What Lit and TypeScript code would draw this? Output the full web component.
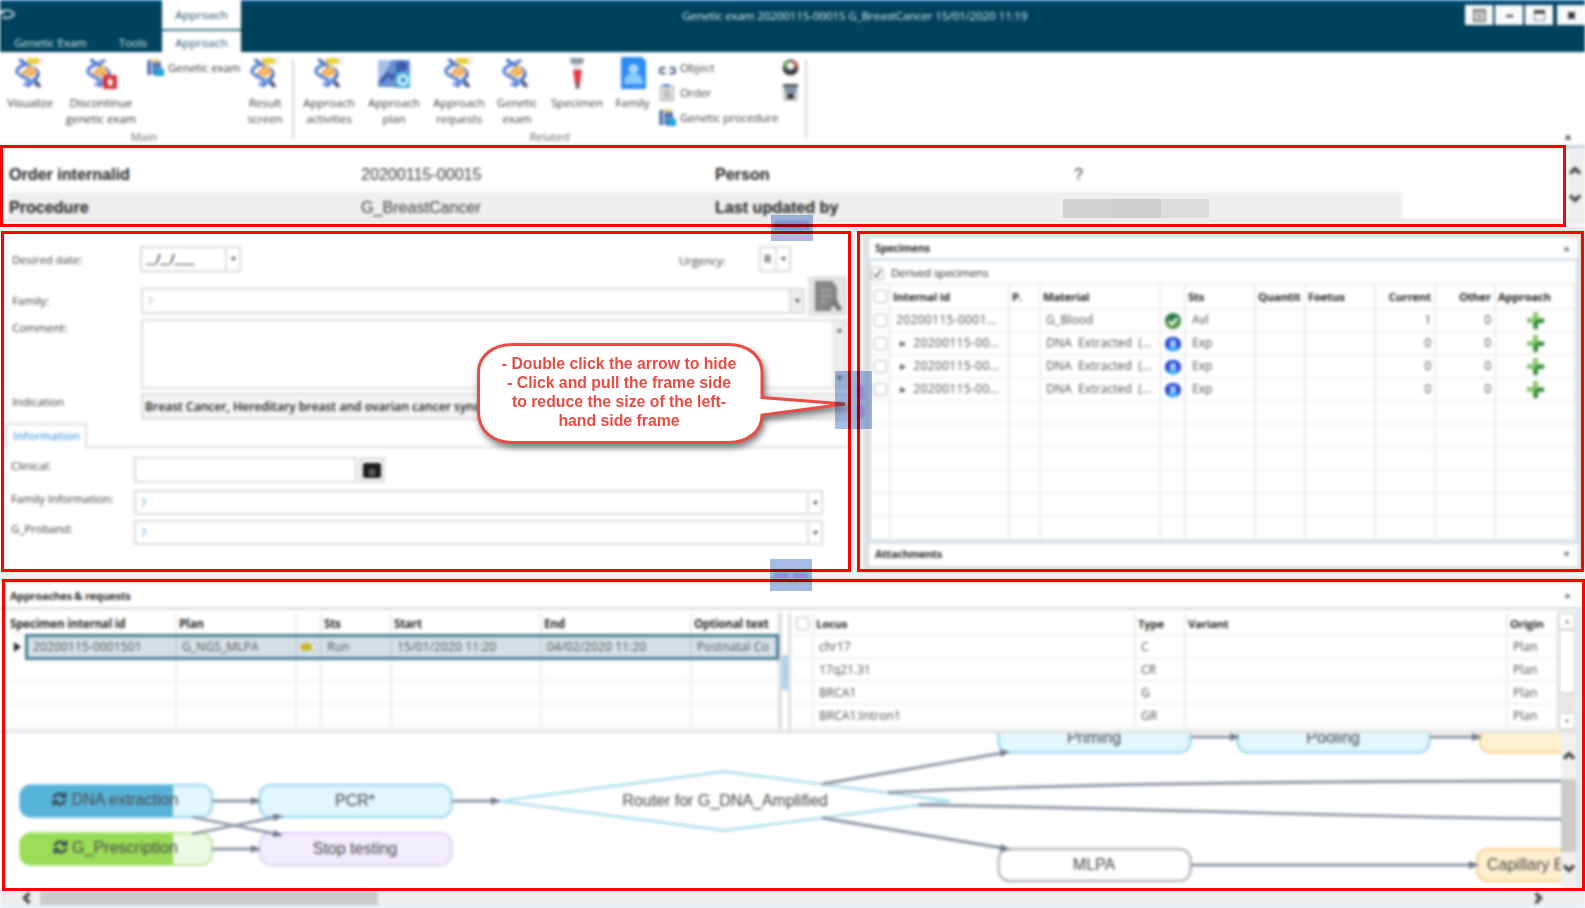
import { LitElement, html, css, svg, nothing } from "lit";
import { customElement } from "lit/decorators.js";
import { classMap } from "lit/directives/class-map.js";

const dna = (badge: string) => html`<svg class="big" viewBox="0 0 32 32">
  <path d="M6 2c2 6 20 8 18 16-1 5-8 6-10 12" fill="none" stroke="#3a62c4" stroke-width="3"/>
  <path d="M20 3C16 7 2 8 3 15c1 5 18 8 22 15" fill="none" stroke="#5b82d8" stroke-width="3.4"/>
  <path d="M8 15l9-8 7 8-5 5-10-2z" fill="#f6c684"/>
  <path d="M8 17l9-7M13 19l8-6" stroke="#e79a3c" stroke-width="1.6"/>
  <path d="M10 29c2-4 6-5 10-4" stroke="#7d9ee6" stroke-width="3" fill="none"/>
  <path d="M22 24l4 6" stroke="#50525c" stroke-width="3"/>
  ${badge === "tag" ? svg`<rect x="13" y="1" width="12" height="6" rx="1" fill="#e8cf3a"/><rect x="25.500" y="1.500" width="4" height="5" rx="1" fill="#fff" stroke="#c9c9c9"/>` : nothing}
  ${badge === "stop" ? svg`<rect x="18" y="18" width="14" height="14" rx="1" fill="#d3343c"/><path d="M23 28v-6l1.500-1 1 2 2-1v5l-2 2z" fill="#fff"/>` : nothing}
</svg>`;

const planIcon = html`<svg class="big" viewBox="0 0 32 32">
  <rect x="0" y="3" width="32" height="27" fill="#6a8fd3"/><path d="M0 3h14L4 20l-4 4z" fill="#a9c0ea"/>
  <path d="M3 25l7-8 4 4 9-11" fill="none" stroke="#33539f" stroke-width="3"/>
  <rect x="18" y="4" width="11" height="10" rx="4" fill="#3c5eb0"/>
  <rect x="17" y="15" width="15" height="16" fill="#45a8cf"/><circle cx="25" cy="23" r="4.500" fill="none" stroke="#d8f3ff" stroke-width="3"/></svg>`;

const tubeIcon = html`<svg class="big" viewBox="0 0 32 32">
  <path d="M9 1h14l-1 6H10z" fill="#8d9aac"/><rect x="12" y="7" width="8" height="6" fill="#e3e6ea"/>
  <path d="M12 13h9l-2 13h-5z" fill="#e2383f"/><path d="M13.500 25h6l-1.500 7h-3z" fill="#88676b"/></svg>`;

const familyIcon = html`<svg class="big" viewBox="0 0 32 32">
  <path d="M4 0h21l4 4v28H4z" fill="#2d8cf2"/><circle cx="16.500" cy="12" r="5" fill="#a5d6ff"/>
  <path d="M7 27c0-6 3-10 6-10h7c3 0 6 4 6 10z" fill="#8bcaff"/></svg>`;

const procIcon = html`<svg class="sm" viewBox="0 0 16 16">
  <path d="M2 1v14M7 3v12" stroke="#2c56a4" stroke-width="3"/><path d="M2 2l8 2M2 7l7 3M2 12l5 1" stroke="#7d96c8" stroke-width="2"/>
  <rect x="4" y="0" width="8" height="3" fill="#e9cf77"/><rect x="9" y="3" width="4" height="6" fill="#4768a8"/>
  <rect x="8" y="9" width="8" height="7" fill="#21a3d4"/></svg>`;
const objIcon = html`<svg class="sm" viewBox="0 0 16 16"><path d="M6 8.500H3a2.500 2.500 0 000 5h3M10 8.500h3a2.500 2.500 0 010 5h-3" fill="none" stroke="#5a7295" stroke-width="2.400"/></svg>`;
const orderIcon = html`<svg class="sm" viewBox="0 0 16 16"><rect x="1.500" y="2" width="12" height="13.500" fill="#eee" stroke="#999"/><rect x="4" y="0" width="6" height="3" fill="#4c93d8"/><path d="M4 6h7M4 9h7M4 12h7" stroke="#888" stroke-width="1.300"/></svg>`;
const globeIcon = html`<svg class="sm" viewBox="0 0 16 16"><circle cx="8" cy="8" r="7.500" fill="#3b3f42"/><path d="M1 8a7 7 0 016-7l1 7z" fill="#6aa84f"/><path d="M9 1a7 7 0 016 7l-6 1z" fill="#d3544a"/><circle cx="8" cy="6.500" r="3.400" fill="#eef3f5"/></svg>`;
const calcIcon = html`<svg class="sm" viewBox="0 0 16 16"><rect x="1" y="0" width="14" height="16" fill="#c6c9ce"/><rect x="1" y="0" width="14" height="3" fill="#4b5563"/><rect x="3" y="4" width="10" height="4" fill="#7486a4"/><rect x="5" y="9" width="6" height="5" fill="#333"/></svg>`;

const okIcon = html`<svg class="st" viewBox="0 0 16 16"><circle cx="8" cy="8" r="8" fill="#2f7a42"/><path d="M1 9a7 7 0 0014-1z" fill="#5c9c3f"/><path d="M4 8l3 3 5.500-6" fill="none" stroke="#fff" stroke-width="2.400"/></svg>`;
const expIcon = html`<svg class="st" viewBox="0 0 16 16"><rect x="0" y="1" width="16" height="14" rx="6.500" fill="#2948cc"/><path d="M2 11h12l-4 4.500H6z" fill="#35b0f2"/><rect x="5" y="4" width="6" height="7" rx="1" fill="#a5c4fa"/></svg>`;
const plusIcon = html`<svg class="plus" viewBox="0 0 20 20"><path d="M7.500 1h5v6.500H19v5h-6.500V19h-5v-6.500H1v-5h6.500z" fill="#45973f"/><path d="M7.500 1h5v6.500L7.500 12.500H1v-5h6.500z" fill="#8fc873"/><path d="M10 10h9v2.500h-6.500V19H10z" fill="#2f8640"/></svg>`;
const chevron = (dir: string) => html`<svg class="chev ${dir}" viewBox="0 0 14 14"><path d="M2 9.500l5-5 5 5" fill="none" stroke="#444" stroke-width="3.300"/></svg>`;
const tri = (dir: string) => html`<svg class="tri ${dir}" viewBox="0 0 8 8"><path d="M0.500 6.500L4 1.500l3.500 5z" fill="#444"/></svg>`;
const box = html`<i class="box"></i>`;

@customElement("app-ribbon")
class AppRibbon extends LitElement {
  static styles = css`
    :host { display: block; font-family: "Open Sans", sans-serif; }
    .title { height: 52px; display: grid; grid-template-columns: 162px 79px 1fr 1fr; background: linear-gradient(#00528a 0, #00528a 2px, #00415c 4px); color: #dde7ec; font-size: 11.6px; }
    .left { display: flex; flex-direction: column; }
    .logo { height: 30px; padding-top: 8px; box-sizing: border-box; }
    .logo svg { width: 17px; height: 13px; display: block; }
    .menus { display: flex; padding: 5px 0 0 14px; gap: 32px; line-height: 16px; letter-spacing: -0.1px; }
    .tabs { background: #fff; color: #1f5674; text-align: center; display: flex; flex-direction: column; }
    .tabs b { font-weight: 400; height: 29px; line-height: 30px; border-bottom: 2px solid #3a7188; box-sizing: content-box; margin-top: 0; }
    .tabs b:last-child { height: 21px; border: 0; line-height: 24px; }
    .caption { padding: 7px 0 0 441px; white-space: nowrap; line-height: 17px; letter-spacing: -0.13px; }
    .win { display: flex; justify-content: flex-end; gap: 2px; padding-top: 5px; }
    .win span { width: 28px; height: 20px; background: #f8fafb; display: grid; place-items: center; }
    .win span:last-child { margin-left: 2px; }
    .win svg { width: 13px; height: 13px; }
    .ribbon { height: 93px; background: #fff; display: flex; border-bottom: 3px solid #c4ced6; color: #3a3a3a; font-size: 11.5px; line-height: 16px; letter-spacing: -0.08px; }
    .group { display: grid; grid-template-rows: 76px 18px; height: 93px; position: relative; }
    .group::after { content: ""; position: absolute; right: -1px; top: 8px; height: 79px; border-left: 2px solid #ccd5e6; }
    .main { width: 293px; } .related { width: 513px; }
    .items { display: grid; }
    .main .items { grid-template-columns: 60px 82px 98px 50px; }
    .related .items { grid-template-columns: 72px 58px 72px 44px 76px 35px 132px 18px; }
    .btn { display: flex; flex-direction: column; align-items: center; text-align: center; padding-top: 5px; white-space: pre; }
    .big { width: 32px; height: 32px; flex: none; margin-bottom: 6px; }
    .sm { width: 17px; height: 17px; flex: none; }
    .col { display: flex; flex-direction: column; gap: 8px; padding: 7px 0 0 9px; }
    .main .col { padding-left: 5px; }
    .col.bare { padding-left: 0; }
    .line { display: flex; gap: 4px; height: 17px; align-items: center; white-space: nowrap; }
    .name { text-align: center; color: #666; padding-left: 0; line-height: 17px; }
    .main .name { margin-left: -5px; }
    .fold { margin-left: auto; padding: 81px 12px 0 0; }
    .tri { width: 10px; height: 8px; display: block; }
  `;
  big(icon: unknown, label: string) { return html`<div class="btn">${icon}${label}</div>`; }
  render() {
    return html`
      <div class="title">
        <div class="left"><div class="logo"><svg viewBox="0 0 17 13"><path d="M0 4c5-3 12-2 14 2-1 4-8 5-12 3M4 5H0" fill="none" stroke="#b9cdd6" stroke-width="2"/></svg></div>
          <div class="menus"><span>Genetic Exam</span><span>Tools</span></div></div>
        <div class="tabs"><b>Approach</b><b>Approach</b></div>
        <div class="caption">Genetic exam 20200115-00015 G_BreastCancer 15/01/2020 11:19</div>
        <div class="win">
          <span><svg viewBox="0 0 13 13"><rect x="1" y="1" width="11" height="11" fill="none" stroke="#555" stroke-width="1.500"/><path d="M1 3h11M3 6h7M3 9h7M6.500 4v6" stroke="#666"/></svg></span>
          <span><svg viewBox="0 0 13 13"><path d="M3 7h7" stroke="#333" stroke-width="2"/></svg></span>
          <span><svg viewBox="0 0 13 13"><rect x="1.500" y="1.500" width="10" height="10" fill="none" stroke="#777"/><path d="M1 3h11" stroke="#333" stroke-width="3"/></svg></span>
          <span><svg viewBox="0 0 13 13"><path d="M3.500 3.500l6 6M9.500 3.500l-6 6" stroke="#222" stroke-width="3"/></svg></span>
        </div>
      </div>
      <div class="ribbon">
        <div class="group main"><div class="items">
          ${this.big(dna("tag"), "Visualize")}${this.big(dna("stop"), "Discontinue\ngenetic exam")}
          <div class="col"><div class="line">${procIcon}Genetic exam</div></div>
          ${this.big(dna("tag"), "Result\nscreen")}
        </div><div class="name">Main</div></div>
        <div class="group related"><div class="items">
          ${this.big(dna("tag"), "Approach\nactivities")}${this.big(planIcon, "Approach\nplan")}${this.big(dna("tag"), "Approach\nrequests")}
          ${this.big(dna(""), "Genetic\nexam")}${this.big(tubeIcon, "Specimen")}${this.big(familyIcon, "Family")}
          <div class="col"><div class="line">${objIcon}Object</div><div class="line">${orderIcon}Order</div><div class="line">${procIcon}Genetic procedure</div></div>
          <div class="col bare">${globeIcon}${calcIcon}</div>
        </div><div class="name">Related</div></div>
        <div class="fold">${tri("up")}</div>
      </div>`;
  }
}

@customElement("exam-form")
class ExamForm extends LitElement {
  static styles = css`
    :host { display: block; background: #fff; padding-top: 15px; box-sizing: border-box; border-bottom: 3px solid #e6e8ea; font: 11.5px/16px "Open Sans", sans-serif; color: #444; letter-spacing: -0.1px; }
    .row { display: flex; margin-bottom: 4px; padding-left: 12px; }
    .lab { width: 129px; flex: none; }
    .in { border: 2px solid #dcdcdc; box-sizing: border-box; background: #fff; display: flex; height: 26px; align-items: center; padding-left: 5px; }
    .in > .dd { margin-left: auto; }
    .dd { width: 14px; height: 100%; border-left: 2px solid #dedede; display: grid; place-items: center; box-sizing: border-box; }
    .tri { width: 7px; height: 6px; } .down { transform: rotate(180deg); }
    .r1 { height: 27px; } .r1 .lab { padding-top: 7px; width: 128px; }
    .date { width: 101px; color: #222; font-size: 12.5px; margin-top: 1px; letter-spacing: -0.4px; font-weight: 600; padding-left: 4px; }
    .urg { margin-left: 438px; width: 80px; padding-top: 8px; }
    .u { width: 32px; font-weight: 600; margin-top: 1px; padding-left: 3px; }
    .r2 { height: 40px; } .r2 .lab { padding-top: 17px; }
    .fam { width: 664px; margin: 12px 3px 0 0; color: #aaa; }
    .grey { background: #eee; }
    .doc { width: 40px; height: 40px; background: #e3e3e3; display: grid; place-items: center; }
    .doc svg { width: 28px; height: 32px; }
    .area { width: 707px; height: 70px; padding: 0; align-items: stretch; justify-content: flex-end; margin-top: -1px; }
    .bar { width: 14px; background: #ececec; display: flex; flex-direction: column; justify-content: space-between; align-items: center; padding: 6px 0; box-sizing: border-box; }
    .ind { width: 709px; height: 27px; background: #f4f4f4; color: #222; font-weight: 600; font-size: 12.1px; padding-left: 2px; letter-spacing: 0; white-space: nowrap; }
    .ilab { padding-top: 1px; }
    .tabs { display: flex; height: 25px; margin: -1px 0 9px 5px; }
    .tab { width: 82px; box-sizing: border-box; border: 2px solid #dedede; border-bottom: 0; color: #1a8bdc; padding: 3px 0 0 6px; letter-spacing: 0.3px; }
    .rest { flex: 1; border-bottom: 2px solid #dedede; }
    .info { padding-left: 11px; margin-bottom: 5px; } .info .lab { width: 123px; padding-top: 1px; white-space: nowrap; }
    .first { margin-bottom: 7px; }
    .clin { width: 223px; margin-right: 2px; } .cal { width: 26px; padding: 0; justify-content: center; background: #f4f4f4; }
    .cal svg { width: 18px; height: 15px; }
    .long { width: 689px; height: 25px; color: #2b9be0; }
  `;
  render() {
    const dd = (c = "") => html`<span class="dd ${c}">${tri("down")}</span>`;
    return html`
      <div class="row r1"><span class="lab">Desired date:</span><div class="in date">__/__/____${dd()}</div>
        <span class="urg">Urgency:</span><div class="in u">R${dd()}</div></div>
      <div class="row r2"><span class="lab">Family:</span><div class="in fam">?${dd("grey")}</div>
        <div class="doc"><svg viewBox="0 0 28 32"><path d="M1 1h17l5 6v13l4 10-4 1H1z" fill="#858585"/><path d="M6 10h11M6 16h12M6 22h7" stroke="#a8a8a8" stroke-width="2.500"/><path d="M20 20l7 10" stroke="#6e6e6e" stroke-width="3"/><path d="M17 27h5v4h-5z" fill="#ddd"/></svg></div></div>
      <div class="row"><span class="lab">Comment:</span><div class="in area"><div class="bar">${tri("up")}${tri("down")}</div></div></div>
      <div class="row"><span class="lab ilab">Indication</span><div class="in ind">Breast Cancer, Hereditary breast and ovarian cancer syndrome</div></div>
      <div class="tabs"><div class="tab">Information</div><div class="rest"></div></div>
      <div class="row info first"><span class="lab">Clinical:</span><div class="in clin"></div><div class="in cal"><svg viewBox="0 0 18 15"><rect width="18" height="15" rx="2" fill="#1c1c1c"/><circle cx="9" cy="9" r="2.500" fill="none" stroke="#aaa" stroke-width="1.200"/></svg></div></div>
      <div class="row info"><span class="lab">Family Information:</span><div class="in long">?${dd()}</div></div>
      <div class="row info"><span class="lab">G_Proband:</span><div class="in long">?${dd()}</div></div>`;
  }
}

const gridCss = css`
  .bar { background: #fff; display: flex; justify-content: space-between; align-items: center; font-weight: 700; color: #333; box-sizing: border-box; letter-spacing: -0.3px; }
  .tri { width: 9px; height: 7px; display: block; opacity: .8; } .down { transform: rotate(180deg); }
  .gr { display: grid; height: 23px; }
  .gr > span { border-right: 2px solid #ececec; border-bottom: 2px solid #f2f2f2; box-sizing: border-box; padding: 2px 0 0 4px; white-space: nowrap; overflow: hidden; line-height: 17px; color: #555; }
  .gr > .ctr { display: grid; place-items: center; padding: 0; }
  .gr > .num { text-align: right; padding-right: 3px; }
  .gr.head > span { font-weight: 700; color: #2c2c2c; padding-left: 2px; font-size: 11.3px; letter-spacing: -0.2px; }
  .gr.head > .ctr { padding: 0; }
  .box { width: 13px; height: 13px; box-sizing: border-box; border: 1.5px solid #b4b4b4; border-radius: 2px; background: #fff; display: grid; place-items: center; }
`;

@customElement("specimen-panel")
class SpecimenPanel extends LitElement {
  static styles = [gridCss, css`
    :host { display: block; box-sizing: border-box; border: solid #dfdfdf; border-width: 8px 7px 6px 5px; background: #d9e1e8; font: 12px/16px "Open Sans", "Noto Sans", sans-serif; }
    .bar { height: 20px; padding: 0 7px 0 6px; font-size: 10.8px; }
    .body { background: #fff; margin: 3px 2px 4px 2px; }
    .derived { height: 24px; display: flex; gap: 7px; align-items: center; color: #333; border-bottom: 2px solid #ececec; box-sizing: border-box; padding: 2px 0 0 0; font-size: 11.5px; letter-spacing: -0.25px; }
    .gr { grid-template-columns: 20px 119px 31px 120px 25px 70px 50px 70px 60px 60px 80px; }
    .head { height: 25px; } .gr.head > span { padding-top: 3px; } .gr.head > .ctr { padding: 0; }
    .row > span { padding-top: 1px; } .row > .ctr { padding-top: 0; }
    .st { width: 16px; height: 16px; } .plus { width: 19px; height: 19px; }
    .row > .id { letter-spacing: 0.35px; padding-left: 5px; } .row > .kid { padding-left: 9px; white-space: pre; }
    .row > .mat { letter-spacing: 0.1px; padding-left: 5px; white-space: pre; } .row > .sts { padding-left: 6px; }
    .foot { height: 22px; padding-bottom: 2px; }
  `];
  render() {
    const rows = [
      { id: "20200115-0001…", mat: "G_Blood", ok: true, s: "Avl", n: 1 },
      ...[0, 1, 2].map(() => ({ id: "▸  20200115-00…", mat: "DNA  Extracted  (…", ok: false, s: "Exp", n: 0 })),
    ];
    return html`
      <div class="bar">Specimens${tri("up")}</div>
      <div class="body">
        <div class="derived"><i class="box"><svg width="9" height="9" viewBox="0 0 9 9"><path d="M1 5l2.500 2.500L8 1" fill="none" stroke="#666" stroke-width="1.500"/></svg></i>Derived specimens</div>
        <div class="gr head"><span class="ctr">${box}</span><span>Internal id</span><span>P.</span><span>Material</span><span></span><span>Sts</span><span>Quantit</span><span>Foetus</span><span class="num">Current</span><span class="num">Other</span><span>Approach</span></div>
        ${rows.map(r => html`<div class="gr row"><span class="ctr">${box}</span><span class=${classMap({ id: true, kid: !r.ok })}>${r.id}</span><span></span><span class="mat">${r.mat}</span><span class="ctr">${r.ok ? okIcon : expIcon}</span><span class="sts">${r.s}</span><span></span><span></span><span class="num">${r.n}</span><span class="num">0</span><span class="ctr">${plusIcon}</span></div>`)}
        ${Array.from({ length: 6 }, () => html`<div class="gr">${Array.from({ length: 11 }, () => html`<span></span>`)}</div>`)}
      </div>
      <div class="bar foot">Attachments${tri("down")}</div>`;
  }
}

@customElement("flow-diagram")
class FlowDiagram extends LitElement {
  static styles = css`
    :host { display: block; overflow: hidden; }
    svg { display: block; }
    text { font: 16px "Liberation Sans", sans-serif; fill: #4c4c4c; text-anchor: middle; }
    .edge { stroke: #8c95a5; stroke-width: 2.8; fill: none; }
    .tip { fill: #717b90; }
    .blue { fill: #e2f6fe; stroke: #a3daed; stroke-width: 2.5; }
    .green { fill: #ecfae3; stroke: #bce89c; stroke-width: 2; }
    .violet { fill: #f2edfb; stroke: #e2d7f8; stroke-width: 2.5; }
    .sand { fill: #feefcf; stroke: #f9d99c; stroke-width: 2.5; }
    .plain { fill: #fff; stroke: #b8b8b8; stroke-width: 2.5; }
    .route { fill: #fff; stroke: #b5e0ef; stroke-width: 2.8; }
    .start { text-anchor: start; }
  `;
  render() {
    const node = (x: number, y: number, c: string) => svg`<rect class=${c} x=${x} y=${y} width="192" height="32" rx="11"/>`;
    const edge = (d: string) => svg`<path class="edge" d=${d} marker-end="url(#tip)"/>`;
    const sync = (x: number, y: number) => svg`<g transform="translate(${x} ${y})" fill="none" stroke="#33474f" stroke-width="2.600"><path d="M1 6c0-4 7-6 10-2M12 8c0 4-7 6-10 2"/><path d="M12.500 0v5h-5M0.500 14V9h5" stroke-width="2"/></g>`;
    return html`<svg width="1551" height="158" viewBox="10 733 1551 158">
      <defs><marker id="tip" markerUnits="userSpaceOnUse" viewBox="0 0 10 10" refX="8" refY="5" markerWidth="10" markerHeight="10" orient="auto"><path class="tip" d="M0 1l10 4-10 4z"/></marker></defs>
      ${node(20, 785, "blue")}<path d="M173 785v32H31a11 11 0 01-11-11v-10a11 11 0 0111-11z" fill="#58b3d9"/>
      ${node(20, 833, "green")}<path d="M173 833v32H31a11 11 0 01-11-11v-10a11 11 0 0111-11z" fill="#9adc57"/>
      ${node(259.5, 785, "blue")}${node(259.5, 833, "violet")}
      <path class="route" d="M500 801L724 771.500 950 801 724 830.500z"/>
      ${node(998.5, 720.5, "blue")}${node(1237.5, 720.5, "blue")}${node(1480, 720.5, "sand")}${node(998.5, 849, "plain")}${node(1477, 849, "sand")}
      ${edge("M212 801H259")}${edge("M212 849H259")}${edge("M192 817L281 835")}${edge("M192 834L281 816")}
      ${edge("M452 801H499")}${edge("M822 784L1008 752")}${edge("M822 818L1008 849")}${edge("M1191 737H1238")}${edge("M1430 737H1480")}${edge("M1191 865H1477")}
      <path class="edge" d="M888 792.500C1020 786 1260 781 1561 781M918 805C1100 807 1380 818 1561 819"/>
      ${sync(53, 792)}${sync(54, 840)}
      <text x="125" y="804.500">DNA extraction</text><text x="125" y="852.500">G_Prescription</text>
      <text x="355" y="806">PCR*</text><text x="355" y="854">Stop testing</text>
      <text x="725" y="806">Router for G_DNA_Amplified</text>
      <text x="1094" y="742.500">Priming</text><text x="1333" y="742.500">Pooling</text><text x="1094" y="870">MLPA</text>
      <text class="start" x="1487" y="870">Capillary Electrophoresis</text>
    </svg>`;
  }
}

@customElement("approach-panel")
class ApproachPanel extends LitElement {
  static styles = [gridCss, css`
    :host { display: grid; grid-template-rows: 23px 3px 124px 1fr 17px; box-sizing: border-box; border-top: 4px solid #dcdcdc; background: #fff; font: 12px/16px "Open Sans", sans-serif; }
    .bar { padding: 2px 13px 0 10px; font-size: 11px; letter-spacing: -0.3px; }
    .rule { background: #d9e1e8; margin: 1px 0 -1px; }
    .tables { display: grid; grid-template-columns: 769px 14px 765px 18px; padding-left: 10px; padding-top: 4px; box-sizing: border-box; border-bottom: 3px solid #e2e2e2; border-right: 8px solid #e3e9ee; }
    .head { height: 23px; } .gr.head > span { padding-top: 2px; }
    .gr.head > span:first-child { padding-left: 0; }
    .gr.a.head > span { font-size: 11.6px; }
    .a { grid-template-columns: 167px 120px 25px 70px 150px 150px 87px; }
    .row > span { padding-left: 5px; }
    .sel { margin-left: 15px; height: 26px; margin-top: -2px; margin-bottom: -1px; box-sizing: border-box; border: 3px solid #477e92; background: #d5dfe6; grid-template-columns: 149px 120px 25px 70px 150px 150px 84px; position: relative; letter-spacing: 0.12px; }
    .sel > span { border-bottom: 0; border-color: #c3ced6; padding-top: 1px; } .sel > span:last-child { border-right: 0; }
    .sel > .ctr { padding: 0; }
    .cur { position: absolute; left: -14px; top: 5px; width: 7px; height: 10px; }
    .split { border: 3px solid #dcdcdc; border-bottom: 0; border-top: 0; display: grid; align-items: center; margin-right: 2px; }
    .split i { display: block; height: 35px; background: #aed2ec; margin-top: 2px; }
    .l { grid-template-columns: 21px 322px 50px 322px 50px; }
    .l.head > .ctr { padding: 0; }
    .row.l > span { padding-left: 5px; }
    .vs { background: #e6e6e6; display: flex; flex-direction: column; justify-content: space-between; border: 1px solid #ddd; box-sizing: border-box; margin-top: -1px; }
    .vs span { background: #fff; height: 16px; display: grid; place-items: center; border: 1px solid #d6d6d6; box-sizing: border-box; } .vs .th { height: 63px; margin-bottom: 20px; }
    .vs .tri { width: 6px; height: 5px; }
    .canvas { display: grid; grid-template-columns: 1551px 15px 9px; padding-left: 10px; overflow: hidden; }
    .vscroll { background: #f0f0f0; display: grid; grid-template-rows: 46px 73px 1fr; justify-items: center; }
    .vscroll .up { margin-top: 16px; } .vscroll .low { margin-top: 9px; }
    .vscroll i { background: #cbcbcb; width: 100%; }
    .edge { background: #e3e9ee; }
    .chev { width: 14px; height: 14px; display: block; }
    .chev.down { transform: rotate(180deg); } .chev.left { transform: rotate(-90deg); } .chev.right { transform: rotate(90deg); }
    .hs { background: #eee; display: flex; align-items: center; padding: 0 40px 1px 20px; border-bottom: 2px solid #e9eff3; box-sizing: border-box; }
    .hs i { width: 338px; height: 14px; background: #cbcbcb; margin-left: 6px; } .hs .right { margin-left: auto; }
  `];
  render() {
    const cells = (n: number) => Array.from({ length: n }, () => html`<span></span>`);
    const loci = [["chr17", "C"], ["17q21.31", "CR"], ["BRCA1", "G"], ["BRCA1:Intron1", "GR"]];
    return html`
      <div class="bar">Approaches &amp; requests${tri("up")}</div><div class="rule"></div>
      <div class="tables">
        <div><div class="gr a head"><span>Specimen internal id</span><span>Plan</span><span></span><span>Sts</span><span>Start</span><span>End</span><span>Optional text</span></div>
          <div class="gr row sel"><svg class="cur" viewBox="0 0 7 10"><path d="M0 0l7 5-7 5z" fill="#222"/></svg><span>20200115-0001501</span><span>G_NGS_MLPA</span><span class="ctr"><svg width="16" height="8" viewBox="0 0 16 8"><rect x="0" y="0.500" width="10" height="7" rx="1" fill="#cdb41a"/><rect x="11.500" y="1.500" width="4" height="5" rx="1" fill="#fff" stroke="#aaa"/></svg></span><span>Run</span><span>15/01/2020 11:20</span><span>04/02/2020 11:20</span><span>Postnatal Co</span></div>
          ${[0, 1, 2].map(() => html`<div class="gr a">${cells(7)}</div>`)}</div>
        <div class="split"><i></i></div>
        <div><div class="gr l head"><span class="ctr">${box}</span><span>Locus</span><span>Type</span><span>Variant</span><span>Origin</span></div>
          ${loci.map(([a, b]) => html`<div class="gr row l"><span></span><span>${a}</span><span>${b}</span><span></span><span>Plan</span></div>`)}</div>
        <div class="vs"><span>${tri("up")}</span><span class="th"></span><span>${tri("down")}</span></div>
      </div>
      <div class="canvas"><flow-diagram></flow-diagram>
        <div class="vscroll"><div>${chevron("up")}</div><i></i><div class="low">${chevron("down")}</div></div><div class="edge"></div></div>
      <div class="hs">${chevron("left")}<i></i>${chevron("right")}</div>`;
  }
}

@customElement("app-root")
class AppRoot extends LitElement {
  static styles = css`
    :host { display: block; position: relative; width: 1585px; height: 908px; overflow: hidden; background: #fff; }
    .app { filter: blur(1.45px); height: 908px; display: grid; grid-template-rows: 148px 73px 9px 342px 7px 329px; background: #f1f1f1; }
    .person { display: grid; grid-template-columns: 1568px 17px; background: #fff; font: 16.1px/20px "Liberation Sans", sans-serif; color: #444; border-bottom: 2px solid #e4e4e4; box-sizing: border-box; }
    .rows { padding: 1px 0 0 9px; }
    .pr { width: 1393px; display: grid; grid-template-columns: 352px 354px 359px 1fr; height: 43px; padding-top: 15px; box-sizing: border-box; }
    .pr b { color: #222; }
    .alt { background: #efefef; height: 28px; padding-top: 5px; }
    .scroll { background: #eee; display: flex; flex-direction: column; gap: 13px; align-items: center; padding: 16px 3px 0 0; }
    .chev { width: 14px; height: 14px; } .chev.down { transform: rotate(180deg); }
    .mid { display: grid; grid-template-columns: 851px 13px 721px; min-height: 0; }
    .gap { background: linear-gradient(#e8e8e8, #fafafa 45%, #e2e2e2); }
    .frame { position: absolute; border: 3px solid #f00; box-sizing: border-box; }
    .f1 { left: 0; top: 145px; width: 1566px; height: 82px; } .f2 { left: 1px; top: 231px; width: 850px; height: 341px; }
    .f3 { left: 857px; top: 231px; width: 727px; height: 341px; } .f4 { left: 2px; top: 579px; width: 1583px; height: 312px; }
    .mosaic { position: absolute; left: 1063px; top: 199px; width: 146px; height: 19px; background: linear-gradient(90deg, #d3d3d3 49px, #cdcdcd 49px 98px, #dcdcdc 98px); }
    .hl { position: absolute; background: #a6bce6; mix-blend-mode: multiply; display: grid; box-sizing: border-box; gap: 4px; }
    .hl i { background: #8299e2; filter: blur(1px); border-radius: 3px; }
    .h1 { left: 771px; top: 215px; width: 42px; height: 26px; padding: 6px 3px 11px; }
    .h2 { left: 835px; top: 371px; width: 37px; height: 58px; padding: 14px 8px 10px 22px; }
    .h3 { left: 770px; top: 559px; width: 42px; height: 32px; padding: 14px 4px 13px; grid-template-columns: 1fr 1fr; }
    .h2 i, .h3 i { background: #a08fe2; }
    .call { position: absolute; left: 470px; top: 336px; width: 385px; height: 120px; }
    .call svg { position: absolute; inset: 0; filter: drop-shadow(2px 4px 3px rgba(0, 0, 0, .5)); }
    .say { position: relative; width: 270px; margin: 18px 0 0 14px; text-align: center; font: bold 15.8px/19px "Liberation Sans", sans-serif; color: #e84c44; white-space: pre; }
  `;
  render() {
    return html`
      <div class="app">
        <app-ribbon></app-ribbon>
        <div class="person"><div class="rows">
          <div class="pr"><b>Order internalid</b><span>20200115-00015</span><b>Person</b><span>?</span></div>
          <div class="pr alt"><b>Procedure</b><span>G_BreastCancer</span><b>Last updated by</b></div>
        </div><div class="scroll">${chevron("up")}${chevron("down")}</div></div>
        <div class="gap"></div>
        <div class="mid"><exam-form></exam-form><div></div><specimen-panel></specimen-panel></div>
        <div class="gap"></div>
        <approach-panel></approach-panel>
      </div>
      <div class="mosaic"></div>
      <div class="frame f1"></div><div class="frame f2"></div><div class="frame f3"></div><div class="frame f4"></div>
      <div class="call"><svg width="385" height="120" viewBox="470 336 385 120"><path d="M513 344.500H728C748 344.500 762 356 762 372V397.500L845 404 762 415V415C762 431 748 442.500 728 442.500H513C493 442.500 478.500 431 478.500 412V372C478.500 356 493 344.500 513 344.500Z" fill="#fff" stroke="#e84c44" stroke-width="3"/></svg>
        <div class="say">- Double click the arrow to hide
- Click and pull the frame side
to reduce the size of the left-
hand side frame</div></div>
      <div class="hl h1"><i></i></div><div class="hl h2"><i></i><i></i></div><div class="hl h3"><i></i><i></i></div>`;
  }
}
